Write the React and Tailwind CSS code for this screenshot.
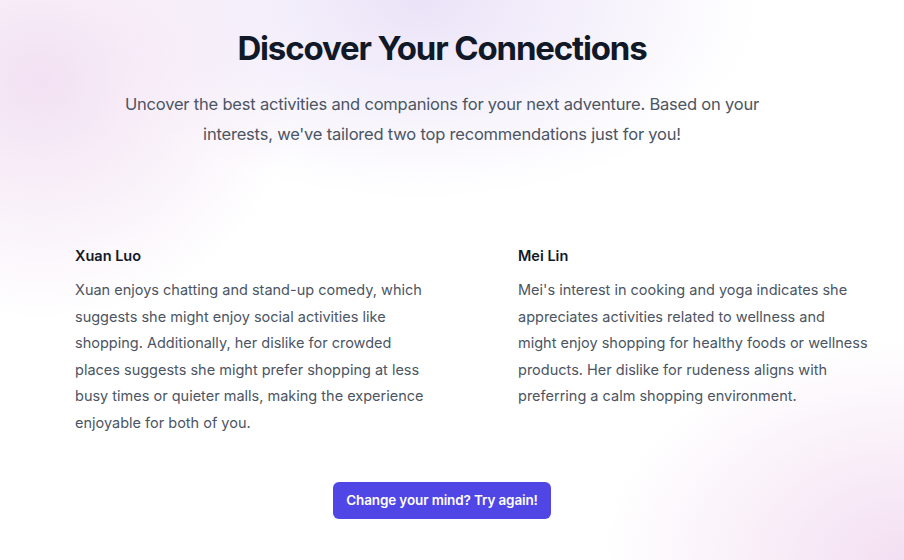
export default function App() {
  return (
    <div
      className="relative w-[904px] h-[560px] overflow-hidden bg-white bg-[radial-gradient(ellipse_260px_240px_at_40px_80px,#f2e1f3_0%,rgba(255,255,255,0)_100%),radial-gradient(ellipse_340px_200px_at_420px_0px,#ebe3f8_0%,rgba(255,255,255,0)_100%),radial-gradient(ellipse_300px_220px_at_904px_560px,#f3dff2_0%,rgba(255,255,255,0)_100%)]"
      style={{ fontFamily: 'Inter, "Noto Sans", sans-serif' }}
    >
      <div className="w-[884px] flex flex-col items-center pt-[27px]">
        <h1 className="text-[33px] leading-[42px] font-bold tracking-[-0.035em] text-[#111827]">
          Discover Your Connections
        </h1>
        <p className="mt-[20px] w-[660px] text-center text-[16.5px] leading-[30px] tracking-[-0.012em] text-[#4b5563]">
          Uncover the best activities and companions for your next adventure. Based on your interests, we've tailored two top recommendations just for you!
        </p>
      </div>
      <div className="mt-[95px] pl-[75px] grid grid-cols-[351px_351px] gap-x-[92px]">
        <div>
          <h2 className="text-[14.5px] leading-[24px] font-semibold text-[#111827]">Xuan Luo</h2>
          <p className="mt-[9px] text-[14.5px] leading-[26.6px] text-[#4b5563]">
            Xuan enjoys chatting and stand-up comedy, which suggests she might enjoy social activities like shopping. Additionally, her dislike for crowded places suggests she might prefer shopping at less busy times or quieter malls, making the experience enjoyable for both of you.
          </p>
        </div>
        <div>
          <h2 className="text-[14.5px] leading-[24px] font-semibold text-[#111827]">Mei Lin</h2>
          <p className="mt-[9px] text-[14.5px] leading-[26.6px] text-[#4b5563]">
            Mei's interest in cooking and yoga indicates she appreciates activities related to wellness and might{"\u00a0"}enjoy shopping for healthy foods or wellness products. Her dislike for rudeness aligns with preferring a calm shopping environment.
          </p>
        </div>
      </div>
      <div className="w-[884px] flex justify-center mt-[45px]">
        <button className="h-[37px] px-[13px] rounded-md bg-[#4f46e5] text-white text-[13.5px] tracking-[-0.01em] font-semibold">
          Change your mind? Try again!
        </button>
      </div>
    </div>
  );
}
